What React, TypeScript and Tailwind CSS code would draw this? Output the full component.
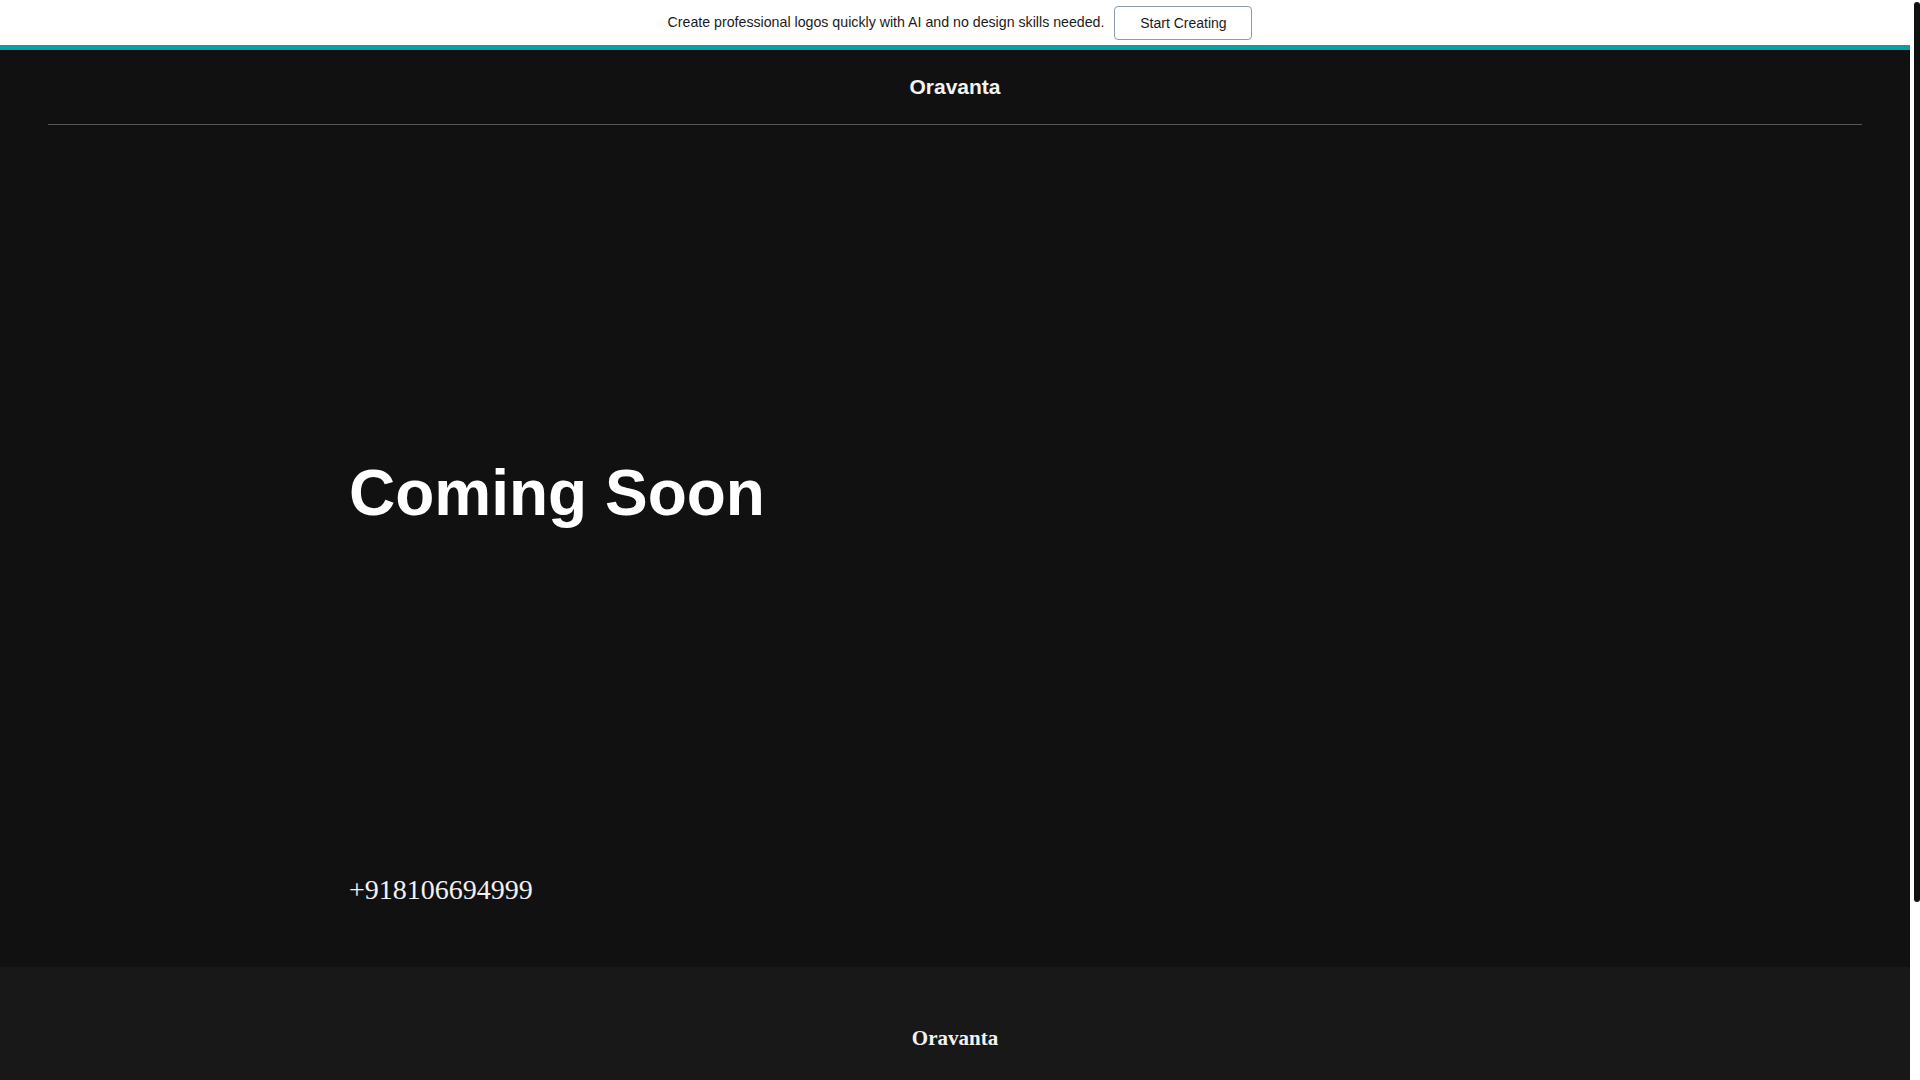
export default function App() {
  return (
    <div className="flex h-[1080px] w-[1920px] overflow-hidden bg-white">
      <div className="flex min-w-0 flex-1 flex-col">
        {/* promo banner */}
        <div className="flex h-[45px] items-center justify-center gap-[10px] bg-white pt-[1px] pl-[10px] font-['Liberation_Sans',Arial,sans-serif] text-[#1b1b1b]">
          <p className="text-[14.2px]">Create professional logos quickly with AI and no design skills needed.</p>
          <button className="h-[34px] w-[138px] rounded-[4px] border border-[#8d9bad] bg-white text-[14px] text-[#1b1b1b]">
            Start Creating
          </button>
        </div>
        <div className="h-[5px] bg-[#0a9fa5]" />

        <main className="bg-[#111111]">
          <header className="mx-[48px] flex h-[75px] items-center justify-center border-b border-[#555555]">
            <span className="font-['Liberation_Sans',Arial,sans-serif] text-[21px] font-bold text-[#f4f4f4]">
              Oravanta
            </span>
          </header>
          <section className="mx-auto flex w-[1212px] flex-col pt-[330px] pb-[60px]">
            <h1 className="font-['Liberation_Sans',Arial,sans-serif] text-[64px] leading-[77px] font-bold text-white">
              Coming Soon
            </h1>
            <p className="mt-[341px] font-['Liberation_Serif','Times_New_Roman',serif] text-[28px] leading-[34px] text-[#f2f2f2]">
              +918106694999
            </p>
          </section>
        </main>

        <footer className="flex-1 bg-[#181818] pt-[59px] text-center">
          <span className="font-['Liberation_Serif','Times_New_Roman',serif] text-[21px] leading-[25px] font-bold text-[#f2f2f2]">
            Oravanta
          </span>
        </footer>
      </div>

      {/* scrollbar */}
      <div className="flex w-[10px] flex-col bg-white pt-[2px] pl-[4px]">
        <div className="h-[900px] w-[6px] rounded-[3px] bg-[#111111]" />
      </div>
    </div>
  );
}
